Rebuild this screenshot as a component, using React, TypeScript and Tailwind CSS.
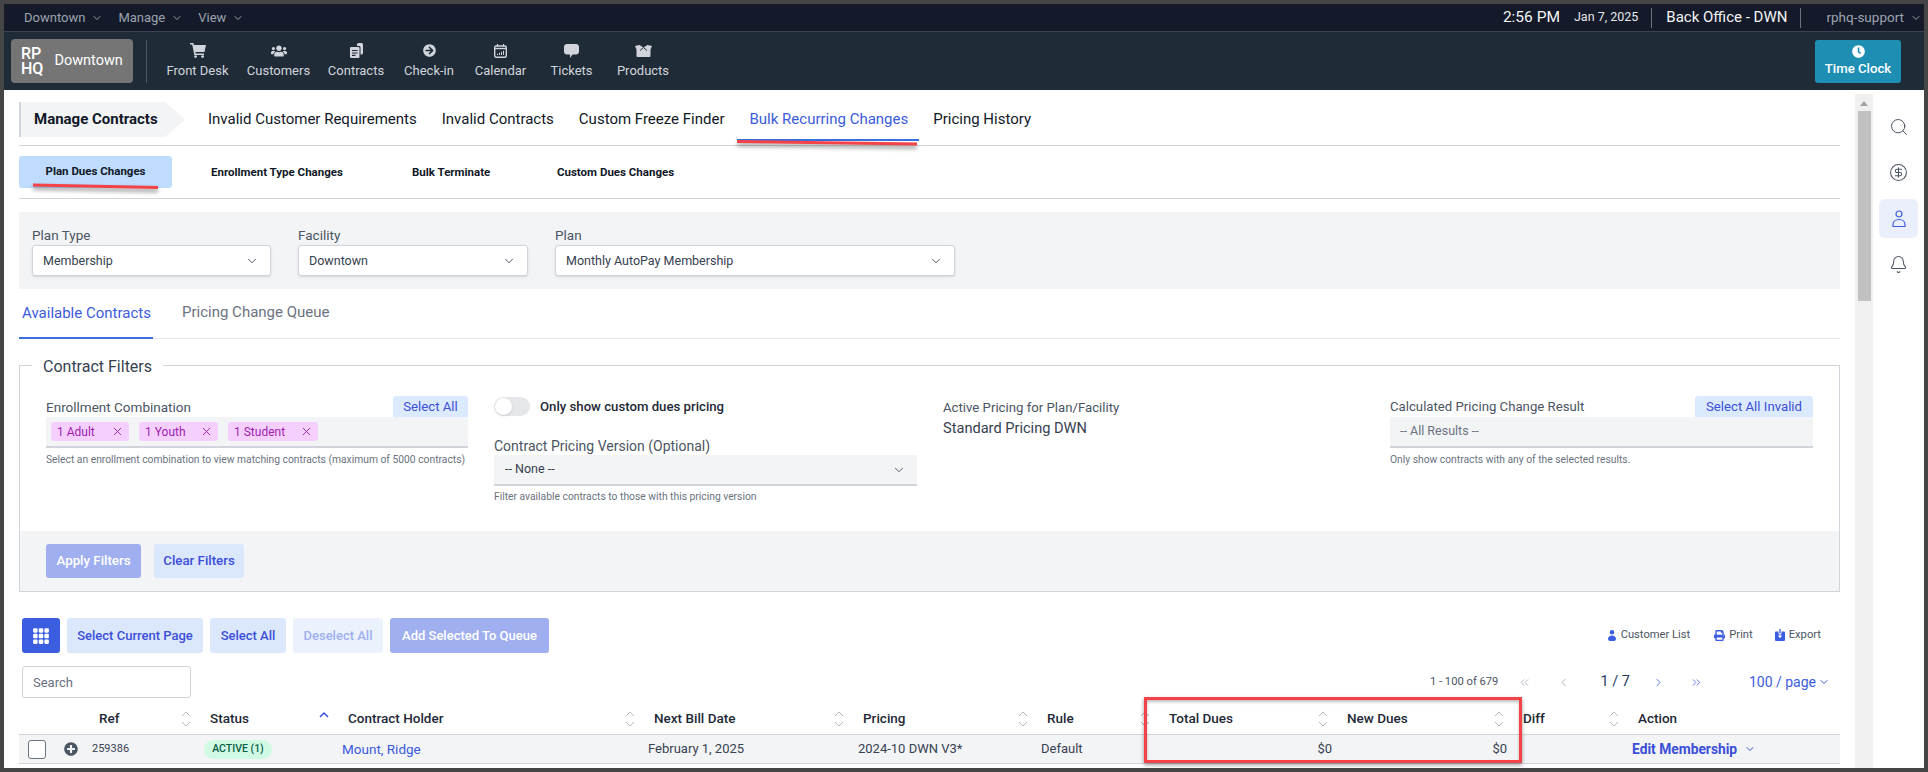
import { ChevronDown, Search, CircleDollarSign, Bell, X, ChevronsLeft, ChevronsRight, ChevronLeft, ChevronRight } from "lucide-react";
import { FaUsers, FaArrowCircleRight, FaClock, FaPrint, FaPlusCircle } from "react-icons/fa";
import { BsGrid3X3GapFill } from "react-icons/bs";
import type { ReactNode } from "react";

function CartIcon() {
  return (
    <svg width="16" height="15" viewBox="0 0 16 15" fill="currentColor">
      <path d="M0 0h3.4l.5 2H16l-1.5 7H5.3l.3 1.5H14V12H4.3L2.2 1.5H0z" />
      <circle cx="5.6" cy="13.6" r="1.4" />
      <circle cx="12.6" cy="13.6" r="1.4" />
    </svg>
  );
}

function ContractsIcon() {
  return (
    <svg width="13" height="15" viewBox="0 0 13 15" fill="currentColor">
      <path d="M7 3V1.5C7 .7 7.7 0 8.5 0h3C12.3 0 13 .7 13 1.5V10c0 .8-.7 1.5-1.5 1.5h-1V4.5C10.500 3.700 9.800 3 9 3z" />
      <rect x="0" y="4" width="9.500" height="11" rx="1.200" />
      <path d="M2 7.500h5.500M2 10h5.500M2 12.400h3.500" stroke="#202b38" strokeWidth="1.100" />
    </svg>
  );
}

function CalendarIcon() {
  return (
    <svg width="13" height="14" viewBox="0 0 13 14" fill="none" stroke="currentColor">
      <rect x=".7" y="2" width="11.600" height="11.300" rx="1.500" strokeWidth="1.400" />
      <path d="M3.500 0v2.500M9.500 0v2.500" strokeWidth="1.200" />
      <path d="M1 4.500h11" strokeWidth="1.400" />
      <path d="M3.500 11V9.800M5.500 11V8.800M7.500 11V7.800M9.500 11V6.800" strokeWidth="1" />
    </svg>
  );
}

function TicketIcon() {
  return (
    <svg width="15" height="14" viewBox="0 0 15 14" fill="currentColor">
      <path d="M3 0h9c1.700 0 3 1.300 3 3v4.500c0 1.700-1.300 3-3 3H8.500L6 14v-3.500H3c-1.700 0-3-1.300-3-3V3c0-1.700 1.300-3 3-3z" />
    </svg>
  );
}

function BoxIcon() {
  return (
    <svg width="17" height="12" viewBox="0 0 17 12" fill="currentColor">
      <path d="M0 1l4.500-1L8.500 2.500 12.500 0 17 1l-1.500 3.500V11a1 1 0 0 1-1 1h-12a1 1 0 0 1-1-1V4.500z" />
      <path d="M5 5.500l3.500-3 3.500 3" fill="none" stroke="#202b38" strokeWidth="1" />
    </svg>
  );
}

function PersonSolid() {
  return (
    <svg width="8" height="11" viewBox="0 0 8 11" fill="currentColor">
      <circle cx="4" cy="2.200" r="2.200" />
      <path d="M0 9c0-2.200 1.800-3.500 4-3.500S8 6.800 8 9c0 1.300-1 2-2 2H2c-1 0-2-.7-2-2z" />
    </svg>
  );
}

function ExportSolid() {
  return (
    <svg width="10" height="12" viewBox="0 0 10 12" fill="currentColor">
      <path d="M1 2.500h2.500V5h3V2.500H9a1 1 0 0 1 1 1V11a1 1 0 0 1-1 1H1a1 1 0 0 1-1-1V3.500a1 1 0 0 1 1-1z" />
      <path d="M5 0v7.500M2.800 5.500L5 8l2.200-2.500" fill="none" stroke="currentColor" strokeWidth="1.300" />
      <path d="M5 4v4M3.500 6.500L5 8.300l1.500-1.800" fill="none" stroke="#fff" strokeWidth="1.100" />
    </svg>
  );
}

function SortIcon() {
  return (
    <svg width="10" height="16" viewBox="0 0 10 16" fill="none" stroke="#b4b8bf" strokeWidth="1" className="shrink-0">
      <path d="M1 5l4-4 4 4M1 11l4 4 4-4" />
    </svg>
  );
}

function SortUpIcon() {
  return (
    <svg width="10" height="16" viewBox="0 0 10 16" fill="none" stroke="#3b4fd8" strokeWidth="1.500" className="shrink-0">
      <path d="M1 6l4-4 4 4" />
    </svg>
  );
}

const navItems: { label: string; icon: ReactNode; w: string }[] = [
  { label: "Front Desk", icon: <CartIcon />, w: "w-[81px]" },
  { label: "Customers", icon: <FaUsers size={16} />, w: "w-[81px]" },
  { label: "Contracts", icon: <ContractsIcon />, w: "w-[74px]" },
  { label: "Check-in", icon: <FaArrowCircleRight size={13} />, w: "w-[72px]" },
  { label: "Calendar", icon: <CalendarIcon />, w: "w-[71px]" },
  { label: "Tickets", icon: <TicketIcon />, w: "w-[71px]" },
  { label: "Products", icon: <BoxIcon />, w: "w-[72px]" },
];

const columns = [
  { label: "Ref", w: "w-[174px]", pl: "pl-[80px]", icon: <SortIcon /> },
  { label: "Status", w: "w-[138px]", pl: "pl-[17px]", icon: <SortUpIcon /> },
  { label: "Contract Holder", w: "w-[306px]", pl: "pl-[17px]", icon: <SortIcon /> },
  { label: "Next Bill Date", w: "w-[209px]", pl: "pl-[17px]", icon: <SortIcon /> },
  { label: "Pricing", w: "w-[184px]", pl: "pl-[17px]", icon: <SortIcon /> },
  { label: "Rule", w: "w-[122px]", pl: "pl-[17px]", icon: <SortIcon /> },
  { label: "Total Dues", w: "w-[178px]", pl: "pl-[17px]", icon: <SortIcon /> },
  { label: "New Dues", w: "w-[176px]", pl: "pl-[17px]", icon: <SortIcon /> },
  { label: "Diff", w: "w-[115px]", pl: "pl-[17px]", icon: <SortIcon /> },
  { label: "Action", w: "w-[219px]", pl: "pl-[17px]" },
];

function Field({ label, value, w }: { label: string; value: string; w: string }) {
  return (
    <div className={w}>
      <div className="h-[20px] text-[13.5px] leading-[20px] text-[#4b5563]">{label}</div>
      <div className="flex h-[31px] items-center justify-between rounded-[3px] border border-[#d1d5db] bg-white pt-[1px] pr-[11px] pl-[10px] text-[12.5px] text-[#374151] shadow-sm">
        {value}
        <ChevronDown size={14} strokeWidth={1.5} />
      </div>
    </div>
  );
}

function Chip({ label, w }: { label: string; w: string }) {
  return (
    <span className={`${w} flex h-[19px] items-center justify-between rounded-[3px] bg-[#f5d0fe] pr-[5px] pl-[6px] text-[12px] text-[#a21caf]`}>
      {label}
      <X size={13} strokeWidth={1.7} />
    </span>
  );
}

export default function App() {
  return (
    <div
      className="relative flex h-[772px] w-[1928px] flex-col overflow-hidden border-4 border-[#454545] bg-white text-[#111827]"
      style={{ fontFamily: "Roboto, sans-serif" }}
    >
      <div className="flex h-[28px] items-center border-b border-[#3a4450] bg-[#141a29] pl-[20px] text-[13px] text-[#9ca3af]">
        <span className="flex items-center gap-[6px]">Downtown <ChevronDown size={12} /></span>
        <span className="ml-[15px] flex items-center gap-[6px]">Manage <ChevronDown size={12} /></span>
        <span className="ml-[15px] flex items-center gap-[6px]">View <ChevronDown size={12} /></span>
        <span className="ml-auto text-[15.5px] text-[#f3f4f6]">2:56 PM</span>
        <span className="ml-[14px] text-[12.5px] text-[#e5e7eb]">Jan 7, 2025</span>
        <span className="mr-[14px] ml-[13px] h-[20px] w-px bg-[#6b7280]" />
        <span className="text-[15px] text-[#f3f4f6]">Back Office - DWN</span>
        <span className="ml-[13px] h-[20px] w-px bg-[#6b7280]" />
        <span className="ml-[25px] text-[13.5px]">rphq-support</span>
        <ChevronDown size={12} className="mr-[2px] ml-[6px]" />
      </div>

      <div className="flex h-[58px] items-center bg-[#202b38] pl-[7px] text-white">
        <div className="flex h-[44px] w-[122px] items-center gap-[11px] rounded-[4px] bg-[#757575] pl-[10px]">
          <span className="text-[16px] leading-[15px] font-medium">RP<br />HQ</span>
          <span className="text-[14.5px]">Downtown</span>
        </div>
        <span className="mr-[10px] ml-[13px] h-[43px] w-px bg-[#4b5563]" />
        {navItems.map((n) => (
          <div key={n.label} className={`${n.w} flex flex-col items-center text-[#d1d5db]`}>
            <span className="mb-[3px] flex h-[16px] items-center">{n.icon}</span>
            <span className="text-[13px] leading-[18px]">{n.label}</span>
          </div>
        ))}
        <div className="mr-[23px] ml-auto flex h-[43px] w-[86px] flex-col items-center justify-center rounded-[3px] bg-[#1e8fb3]">
          <FaClock size={13} />
          <span className="mt-[3px] text-[13.2px] leading-[16px] font-medium">Time Clock</span>
        </div>
      </div>

      <div className="flex min-h-0 flex-1">
        <div className="min-w-0 flex-1 px-[15px] pt-[12px]">
          <div className="flex h-[44px] border-b border-[#d1d5db] pb-[8px]">
            <div className="flex h-[35px] w-[166px] items-center border-l-2 border-[#d1d5db] bg-[#f3f4f6] pl-[13px] text-[15px] font-bold [clip-path:polygon(0_0,88%_0,100%_50%,88%_100%,0_100%)]">
              Manage Contracts
            </div>
            <div className="ml-[23px] flex h-[34px] items-center gap-[25px] text-[15px]">
              <span>Invalid Customer Requirements</span>
              <span>Invalid Contracts</span>
              <span>Custom Freeze Finder</span>
              <span className="relative text-[#3b5bdb]">
                Bulk Recurring Changes
                <span className="absolute -bottom-[11px] -left-[13px] h-[2px] w-[182px] bg-[#3b6fe0]" />
              </span>
              <span>Pricing History</span>
            </div>
          </div>

          <div className="flex h-[53px] items-start border-b border-[#d1d5db] pt-[10px] text-[11.5px] font-bold whitespace-nowrap">
            <div className="flex h-[32px] w-[153px] items-center justify-center rounded-[3px] bg-[#bfdbfe]">Plan Dues Changes</div>
            <span className="mt-[8px] ml-[39px] w-[136px]">Enrollment Type Changes</span>
            <span className="mt-[8px] ml-[65px] w-[80px]">Bulk Terminate</span>
            <span className="mt-[8px] ml-[65px]">Custom Dues Changes</span>
          </div>

          <div className="mt-[13px] flex h-[77px] gap-[27px] bg-[#f3f4f6] pt-[13px] pl-[13px]">
            <Field label="Plan Type" value="Membership" w="w-[239px]" />
            <Field label="Facility" value="Downtown" w="w-[230px]" />
            <Field label="Plan" value="Monthly AutoPay Membership" w="w-[400px]" />
          </div>

          <div className="flex h-[50px] items-end border-b border-[#e5e7eb] text-[15px] whitespace-nowrap">
            <span className="-mb-px h-[37px] w-[134px] border-b-2 border-[#3b6fe0] pl-[3px] text-[#3b5bdb]">Available Contracts</span>
            <span className="ml-[29px] h-[37px] text-[#6b7280]">Pricing Change Queue</span>
          </div>

          <div className="relative mt-[26px] h-[227px] border border-[#d1d5db]">
            <span className="absolute -top-[11px] left-[12px] bg-white px-[11px] text-[16px] leading-[24px] text-[#374151]">Contract Filters</span>
            <div className="flex h-[165px] pt-[30px] pl-[26px]">
              <div className="w-[422px]">
                <div className="flex h-[21px] items-center justify-between">
                  <span className="pt-[1px] text-[13.5px] text-[#4b5563]">Enrollment Combination</span>
                  <span className="flex h-[21px] w-[75px] items-center justify-center rounded-t-[3px] bg-[#dbeafe] pt-[1px] text-[13.2px] text-[#3b4fd8]">Select All</span>
                </div>
                <div className="flex h-[31px] items-center gap-[10px] border-b-2 border-[#d1d5db] bg-[#f3f4f6] pl-[5px]">
                  <Chip label="1 Adult" w="w-[78px]" />
                  <Chip label="1 Youth" w="w-[79px]" />
                  <Chip label="1 Student" w="w-[90px]" />
                </div>
                <div className="mt-[5px] text-[10.3px] leading-[14px] whitespace-nowrap text-[#6b7280]">Select an enrollment combination to view matching contracts (maximum of 5000 contracts)</div>
              </div>
              <div className="ml-[26px] w-[423px]">
                <div className="flex h-[21px] items-center gap-[10px]">
                  <span className="flex h-[19px] w-[36px] items-center rounded-full bg-[#e5e7eb] pl-[1px]"><span className="h-[17px] w-[17px] rounded-full bg-white shadow" /></span>
                  <span className="text-[13.2px] font-medium text-[#1f2937]">Only show custom dues pricing</span>
                </div>
                <div className="mt-[19px] text-[14px] leading-[20px] text-[#4b5563]">Contract Pricing Version (Optional)</div>
                <div className="mt-[-1px] flex h-[31px] items-center justify-between border-b-2 border-[#d1d5db] bg-[#f3f4f6] pr-[11px] pl-[11px] text-[12.5px] text-[#374151]">
                  -- None --
                  <ChevronDown size={14} strokeWidth={1.5} />
                </div>
                <div className="mt-[4px] text-[10.3px] leading-[14px] text-[#6b7280]">Filter available contracts to those with this pricing version</div>
              </div>
              <div className="ml-[26px] w-[447px]">
                <div className="h-[21px] pt-[1px] text-[13.2px] leading-[21px] text-[#4b5563]">Active Pricing for Plan/Facility</div>
                <div className="text-[14.6px] leading-[22px] text-[#374151]">Standard Pricing DWN</div>
              </div>
              <div className="w-[423px]">
                <div className="flex h-[21px] items-center justify-between">
                  <span className="pt-[1px] text-[13.2px] text-[#4b5563]">Calculated Pricing Change Result</span>
                  <span className="flex h-[21px] w-[118px] items-center justify-center rounded-t-[3px] bg-[#dbeafe] pt-[1px] text-[13.2px] text-[#3b4fd8]">Select All Invalid</span>
                </div>
                <div className="flex h-[31px] items-center border-b-2 border-[#d1d5db] bg-[#f3f4f6] pl-[10px] text-[12.5px] text-[#6b7280]">-- All Results --</div>
                <div className="mt-[5px] text-[10.3px] leading-[14px] text-[#6b7280]">Only show contracts with any of the selected results.</div>
              </div>
            </div>
            <div className="flex h-[60px] items-center gap-[13px] bg-[#f3f4f6] pl-[26px] text-[13.3px] font-medium">
              <span className="flex h-[34px] w-[95px] items-center justify-center rounded-[3px] bg-[#a0aff0] text-white">Apply Filters</span>
              <span className="flex h-[34px] w-[90px] items-center justify-center rounded-[3px] bg-[#dbe7fb] text-[#3b4fd8]">Clear Filters</span>
            </div>
          </div>

          <div className="mt-[26px] flex h-[35px] items-center gap-[7px] pl-[3px] text-[13px] font-medium">
            <span className="flex h-[35px] w-[38px] items-center justify-center rounded-[3px] bg-[#3b5de0] text-white"><BsGrid3X3GapFill size={18} /></span>
            <span className="flex h-[35px] w-[136px] items-center justify-center rounded-[3px] bg-[#dbe7fb] text-[#3b4fd8]">Select Current Page</span>
            <span className="flex h-[35px] w-[76px] items-center justify-center rounded-[3px] bg-[#dbe7fb] text-[#3b4fd8]">Select All</span>
            <span className="flex h-[35px] w-[90px] items-center justify-center rounded-[3px] bg-[#ebf2fd] text-[#a0aff0]">Deselect All</span>
            <span className="flex h-[35px] w-[159px] items-center justify-center rounded-[3px] bg-[#a0aff0] text-white">Add Selected To Queue</span>
            <div className="ml-auto flex items-center pr-[19px] text-[11.2px] font-normal text-[#4b5563]">
              <span className="mr-[5px] text-[#3b5de0]"><PersonSolid /></span>Customer List
              <FaPrint size={11} className="mr-[4px] ml-[24px] text-[#3b5de0]" />Print
              <span className="mr-[4px] ml-[22px] text-[#3b5de0]"><ExportSolid /></span>Export
            </div>
          </div>

          <div className="mt-[13px] flex h-[32px] items-start pl-[3px] text-[13px]">
            <div className="flex h-[32px] w-[169px] items-center rounded-[3px] border border-[#d1d5db] pt-[1px] pl-[10px] text-[#6b7280]">Search</div>
            <div className="ml-auto flex h-[32px] items-center pr-[10px]">
              <span className="text-[11.2px] text-[#4b5563]">1 - 100 of 679</span>
              <ChevronsLeft size={13} strokeWidth={1.5} className="ml-[20px] text-[#9ca3af]" />
              <ChevronLeft size={13} strokeWidth={1.5} className="ml-[26px] text-[#9ca3af]" />
              <span className="ml-[30px] text-[14.5px] text-[#1e3a5f]">1 / 7</span>
              <ChevronRight size={13} strokeWidth={1.5} className="ml-[22px] text-[#3b5de0]" />
              <ChevronsRight size={13} strokeWidth={1.5} className="ml-[25px] text-[#3b5de0]" />
              <span className="ml-[46px] text-[14px] text-[#3b5de0]">100 / page</span>
              <ChevronDown size={12} className="ml-[2px] text-[#3b5de0]" />
            </div>
          </div>

          <div className="flex h-[36px] items-center pt-[5px] text-[13.5px] font-medium text-[#1f2937]">
            {columns.map((c) => (
              <div key={c.label} className={`${c.w} ${c.pl} flex h-[31px] shrink-0 items-center justify-between pr-[2px]`}>
                {c.label}
                {c.icon}
              </div>
            ))}
          </div>
          <div className="flex h-[30px] items-center border-y border-[#d1d5db] bg-[#f3f4f6] text-[13px] text-[#374151]">
            <span className="ml-[9px] h-[19px] w-[18px] rounded-[3px] border border-[#6b7280] bg-white" />
            <FaPlusCircle size={14} className="ml-[18px] text-[#4b5563]" />
            <span className="ml-[14px] w-[112px] text-[11px]">259386</span>
            <span className="flex h-[19px] w-[68px] items-center justify-center rounded-full bg-[#d1fae5] text-[10.5px] font-medium text-[#065f46]">ACTIVE (1)</span>
            <span className="ml-[70px] w-[306px] text-[13.5px] text-[#3b5bdb]">Mount, Ridge</span>
            <span className="w-[210px]">February 1, 2025</span>
            <span className="w-[183px]">2024-10 DWN V3*</span>
            <span className="w-[105px]">Default</span>
            <span className="w-[186px] text-right">$0</span>
            <span className="w-[175px] text-right">$0</span>
            <span className="ml-[125px] flex items-center gap-[7px] text-[13.8px] font-bold text-[#3b4fd8]">Edit Membership <ChevronDown size={12} /></span>
          </div>
        </div>

        <div className="mt-[4px] flex w-[18px] flex-col items-center bg-[#f0f0f0]">
          <svg width="8" height="5" viewBox="0 0 8 5" className="mt-[7px]" fill="#a3a3a3"><path d="M0 5l4-5 4 5z" /></svg>
          <div className="mt-[5px] h-[190px] w-[13px] bg-[#c1c1c1]" />
        </div>

        <div className="flex w-[51px] flex-col items-center gap-[7px] pt-[17px] text-[#4b5563]">
          <span className="flex h-[39px] w-[39px] items-center justify-center"><Search size={20} strokeWidth={1.2} /></span>
          <span className="flex h-[39px] w-[39px] items-center justify-center"><CircleDollarSign size={19} strokeWidth={1.3} /></span>
          <span className="flex h-[39px] w-[39px] items-center justify-center rounded-[6px] bg-[#eaeffb] text-[#3b5de0]"><svg width="14" height="18" viewBox="0 0 14 18" fill="none" stroke="currentColor" strokeWidth="1.2"><circle cx="7" cy="4" r="3" /><path d="M1 16.500v-2C1 11.500 3.500 9.500 7 9.500s6 2 6 5v2z" /></svg></span>
          <span className="flex h-[39px] w-[39px] items-center justify-center"><Bell size={19} strokeWidth={1.3} /></span>
        </div>
      </div>

      {/* red markup drawn on top of the screenshot */}
      <svg width="1920" height="764" className="pointer-events-none absolute top-0 left-0 drop-shadow-[0_3px_2px_rgba(0,0,0,0.45)]" fill="none" stroke="#f44348" strokeWidth="3">
        <path d="M733 137.500 L913 140" />
        <path d="M29 181 L154 183.500" />
      </svg>
      <div className="pointer-events-none absolute top-[693px] left-[1140px] h-[66px] w-[378px] border-[3px] border-[#f44348] shadow-[0_2px_4px_rgba(0,0,0,0.4),inset_0_2px_3px_rgba(0,0,0,0.25)]" />
    </div>
  );
}
